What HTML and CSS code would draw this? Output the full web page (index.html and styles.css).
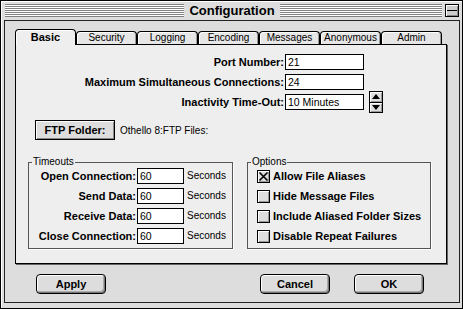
FILE: index.html
```html
<!DOCTYPE html>
<html>
<head>
<meta charset="utf-8">
<title>Configuration</title>
<link rel="stylesheet" href="styles.css">
</head>
<body>
<div class="window">
  <div class="titlebar">
    <div class="stripes"></div>
    <div class="title">Configuration</div>
    <div class="title-right">
      <div class="stripes"></div>
      <div class="collapse"></div>
    </div>
  </div>
  <div class="content">
    <div class="tabs">
      <div class="tab selected">Basic</div>
      <div class="tab">Security</div>
      <div class="tab">Logging</div>
      <div class="tab">Encoding</div>
      <div class="tab">Messages</div>
      <div class="tab">Anonymous</div>
      <div class="tab">Admin</div>
    </div>
    <div class="panel">
      <div class="fields">
        <div class="flabel">Port Number:</div>
        <div class="input">21</div>
        <div></div>
        <div class="flabel">Maximum Simultaneous Connections:</div>
        <div class="input">24</div>
        <div></div>
        <div class="flabel">Inactivity Time-Out:</div>
        <div class="input">10 Minutes</div>
        <div class="spin">
          <svg width="14" height="22" viewBox="0 0 14 22">
            <rect x="0.5" y="0.5" width="13" height="21" fill="#ddd" stroke="#000"/>
            <path d="M1.5 10.5 V1.5 H12.5" fill="none" stroke="#fff"/>
            <path d="M1.5 20.5 V12.5 H12.5" fill="none" stroke="#fff"/>
            <path d="M12.5 2 V10.5 H2" fill="none" stroke="#999"/>
            <path d="M12.5 13 V20.5 H2" fill="none" stroke="#999"/>
            <line x1="0" y1="11.5" x2="14" y2="11.5" stroke="#000"/>
            <path d="M7 3 L11 8 L3 8 Z" fill="#000"/>
            <path d="M3 14 L11 14 L7 19 Z" fill="#000"/>
          </svg>
        </div>
      </div>
      <div class="folder-row">
        <div class="btn-square">FTP Folder:</div>
        <span class="path">Othello 8:FTP Files:</span>
      </div>
      <div class="groups">
        <fieldset class="group timeouts">
          <legend>Timeouts</legend>
          <div class="tgrid">
            <div class="flabel">Open Connection:</div>
            <div class="input small">60</div>
            <div class="unit">Seconds</div>
            <div class="flabel">Send Data:</div>
            <div class="input small">60</div>
            <div class="unit">Seconds</div>
            <div class="flabel">Receive Data:</div>
            <div class="input small">60</div>
            <div class="unit">Seconds</div>
            <div class="flabel">Close Connection:</div>
            <div class="input small">60</div>
            <div class="unit">Seconds</div>
          </div>
        </fieldset>
        <fieldset class="group options">
          <legend>Options</legend>
          <div class="ogrid">
            <div class="opt"><span class="cb checked"><svg width="11" height="11" viewBox="0 0 11 11"><path d="M1.5 1.5 L9.5 9.5 M9.5 1.5 L1.5 9.5" stroke="#000" stroke-width="1.6"/></svg></span><span class="olabel">Allow File Aliases</span></div>
            <div class="opt"><span class="cb"></span><span class="olabel">Hide Message Files</span></div>
            <div class="opt"><span class="cb"></span><span class="olabel">Include Aliased Folder Sizes</span></div>
            <div class="opt"><span class="cb"></span><span class="olabel">Disable Repeat Failures</span></div>
          </div>
        </fieldset>
      </div>
    </div>
    <div class="buttons">
      <div class="btn apply">Apply</div>
      <div class="btn">Cancel</div>
      <div class="btn">OK</div>
    </div>
  </div>
</div>
</body>
</html>
```

FILE: styles.css
```css
body {
  margin: 0;
  background: #fff;
  font-family: "Liberation Sans", Arial, sans-serif;
  font-size: 11px;
  color: #000;
}

.window {
  width: 463px;
  height: 309px;
  box-sizing: border-box;
  border: 1px solid #000;
  background: #ddd;
  display: flex;
  flex-direction: column;
  box-shadow: inset 1px 1px 0 #fff;
}

.titlebar {
  flex: none;
  height: 19px;
  display: grid;
  grid-template-columns: 1fr auto 1fr;
  column-gap: 5px;
  align-items: center;
  padding: 0 3px 0 4px;
}

.stripes {
  height: 13px;
  background: repeating-linear-gradient(to bottom, #808080 0 1px, #fff 1px 2px);
}

.title {
  font-weight: bold;
  font-size: 13px;
  line-height: 19px;
  white-space: nowrap;
}

.title-right {
  display: flex;
  align-items: center;
  gap: 3px;
}

.title-right .stripes {
  flex: 1;
}

.collapse {
  width: 14px;
  height: 13px;
  box-sizing: border-box;
  border: 1px solid #000;
  background: linear-gradient(#000, #000) center / 100% 1px no-repeat, #ccc;
  box-shadow: inset 1px 1px 0 #fff, inset -1px -1px 0 #888;
}

.content {
  flex: 1;
  margin: 0 2px 5px 3px;
  border: 1px solid #222;
  display: flex;
  flex-direction: column;
}

.tabs {
  display: flex;
  align-items: flex-end;
  height: 15px;
  margin: 8px 0 0 10px;
}

.tab {
  width: 61px;
  height: 13px;
  box-sizing: border-box;
  border: 1px solid #000;
  border-bottom: none;
  border-radius: 4px 4px 0 0;
  background: #e6e6e6;
  text-align: center;
  font-size: 10px;
  line-height: 12px;
  white-space: nowrap;
  box-shadow: inset 1px 1px 0 #fff, inset -1px 0 0 #999;
}

.tab.selected {
  height: 16px;
  margin-bottom: -1px;
  background: #eee;
  font-weight: bold;
  font-size: 11px;
  line-height: 15px;
  position: relative;
  z-index: 1;
  box-shadow: inset 1px 1px 0 #fff;
}

.panel {
  margin: 0 12px 0 10px;
  border: 1px solid #000;
  background: #eee;
  box-shadow: 1px 1px 0 #666;
  padding: 9px 0 14px 0;
}

.fields {
  display: grid;
  grid-template-columns: 268px 79px 14px;
  grid-auto-rows: 16px;
  column-gap: 1px;
  row-gap: 4px;
}

.flabel {
  font-weight: bold;
  text-align: right;
  line-height: 16px;
  white-space: nowrap;
}

.input {
  box-sizing: border-box;
  height: 16px;
  border: 1px solid #000;
  background: #fff;
  padding-left: 2px;
  font-size: 10.5px;
  line-height: 14px;
  white-space: nowrap;
}

.spin {
  margin: -3px 0 -3px 4px;
  width: 14px;
  height: 22px;
}

.spin svg {
  display: block;
}

.folder-row {
  display: flex;
  align-items: center;
  gap: 5px;
  margin: 10px 0 0 19px;
}

.btn-square {
  width: 80px;
  height: 20px;
  box-sizing: border-box;
  border: 1px solid #000;
  background: #ddd;
  font-weight: bold;
  text-align: center;
  line-height: 18px;
  box-shadow: inset 1px 1px 0 #fff, inset -1px -1px 0 #888;
}

.path {
  font-size: 10px;
}

.groups {
  display: flex;
  gap: 14px;
  margin: 16px 0 0 12px;
}

.group {
  margin: 0;
  padding: 0 0 4px 0;
  border: 1px solid #555;
  min-width: 0;
  box-sizing: border-box;
  box-shadow: 1px 1px 0 #fff;
}

.group legend {
  font-size: 10px;
  line-height: 12px;
  padding: 0 1px;
  margin-left: 3px;
}

.timeouts {
  width: 205px;
}

.options {
  width: 184px;
}

.tgrid {
  display: grid;
  grid-template-columns: 107px 47px auto;
  grid-auto-rows: 16px;
  column-gap: 1px;
  row-gap: 4px;
}

.unit {
  font-size: 10px;
  line-height: 16px;
  margin-left: 2px;
}

.ogrid {
  display: grid;
  grid-auto-rows: 16px;
  row-gap: 4px;
  padding-left: 9px;
}

.opt {
  display: flex;
  align-items: center;
  gap: 3px;
}

.cb {
  width: 13px;
  height: 13px;
  box-sizing: border-box;
  border: 1px solid #000;
  background: #ddd;
  box-shadow: inset 1px 1px 0 #fff, inset -1px -1px 0 #999;
  display: block;
}

.cb svg {
  display: block;
}

.olabel {
  font-weight: bold;
  white-space: nowrap;
}

.buttons {
  display: flex;
  gap: 24px;
  margin-top: 10px;
  padding: 0 35px 0 31px;
}

.btn {
  width: 70px;
  height: 20px;
  box-sizing: border-box;
  border: 1px solid #000;
  border-radius: 4px;
  background: #ddd;
  font-weight: bold;
  text-align: center;
  line-height: 18px;
  box-shadow: inset 1px 1px 0 #fff, inset -1px -1px 0 #777, inset -2px -2px 0 #aaa;
}

.btn.apply {
  margin-right: auto;
}
```
